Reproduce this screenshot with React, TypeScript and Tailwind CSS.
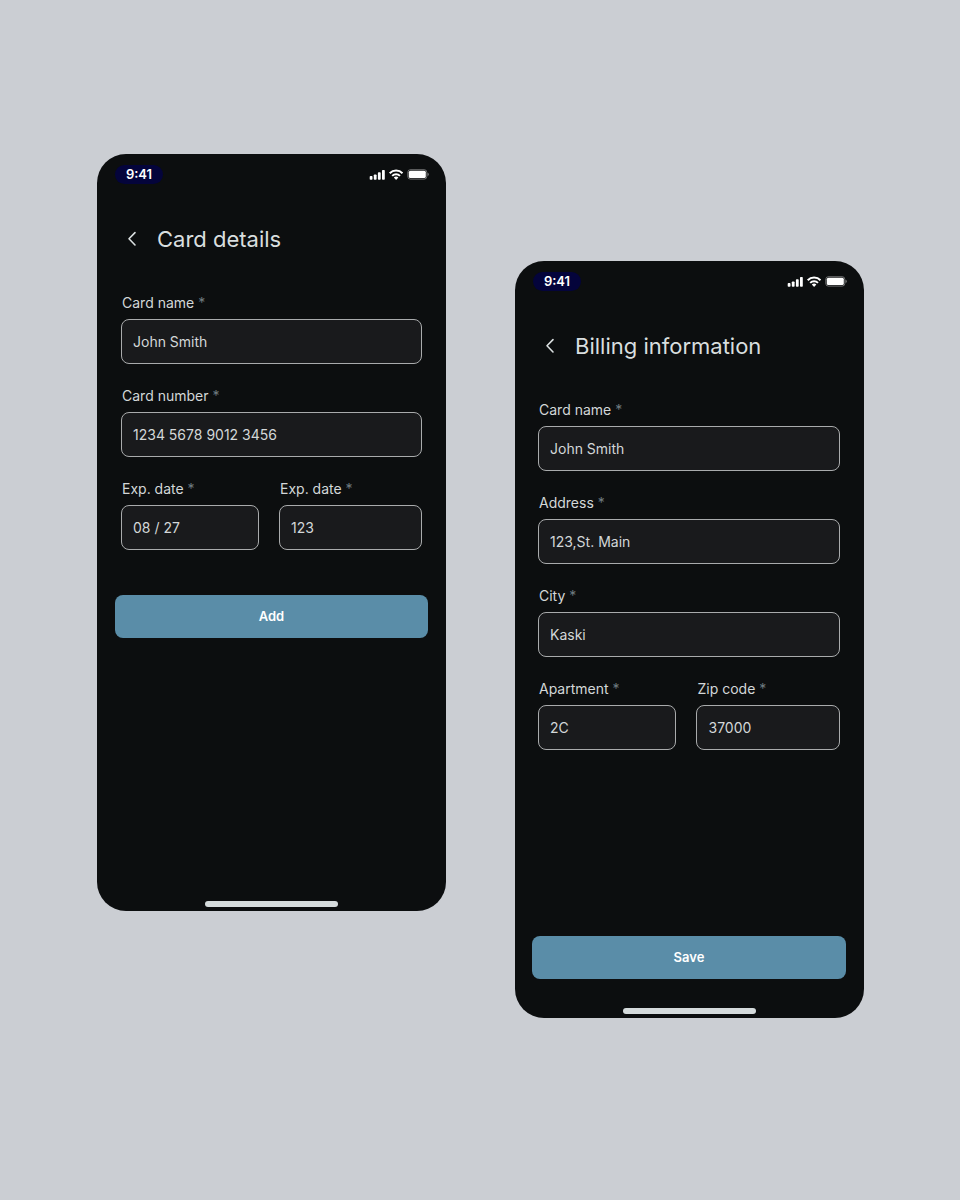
import { useId } from 'react';
import type { ReactNode } from 'react';

interface FieldProps {
  label: string;
  value: string;
}

function StatusIcons() {
  return (
    <svg width="60" height="12" viewBox="0 0 60 12" fill="none" aria-hidden="true">
      {/* Signal */}
      <g fill="#fff">
        <rect x="0.7" y="7.1" width="2.8" height="3.6" rx="0.8" />
        <rect x="4.8" y="5.5" width="2.8" height="5.2" rx="0.8" />
        <rect x="8.9" y="3.3" width="2.8" height="7.4" rx="0.8" />
        <rect x="13" y="0.9" width="2.8" height="9.8" rx="0.8" />
      </g>
      {/* Wifi */}
      <g stroke="#fff" strokeWidth="2">
        <path d="M20.7 4.2a9 9 0 0 1 12.8 0" />
        <path d="M23.2 6.9a5.5 5.5 0 0 1 7.8 0" />
      </g>
      <path d="M27.1 11l-2.3-2.4a3.2 3.2 0 0 1 4.6 0z" fill="#fff" />
      {/* Battery */}
      <rect x="38.8" y="0.7" width="19" height="9.4" rx="2.6" stroke="#fff" strokeOpacity="0.4" />
      <rect x="39.8" y="1.7" width="17" height="7.4" rx="1.5" fill="#fff" />
      <path d="M58.6 3.8v3.2a1.7 1.7 0 0 0 0-3.2z" fill="#fff" fillOpacity="0.5" />
    </svg>
  );
}

function Field({ label, value }: FieldProps) {
  const id = useId();

  return (
    <div className="min-w-0">
      <label htmlFor={id} className="block pl-px text-sm leading-5 text-[#d3d7d8]">
        {label} <span className="text-[#6f7b80]">*</span>
      </label>
      <input
        id={id}
        type="text"
        defaultValue={value}
        className="mt-1.5 block h-[45px] w-full rounded-lg border border-[#a9abac] bg-[#191a1c] px-[11px] text-sm text-[#d3d7d8] outline-none focus:border-[#5a8da8]"
      />
    </div>
  );
}

function SubmitButton({ children }: { children: ReactNode }) {
  return (
    <button
      type="submit"
      className="h-[43px] w-full cursor-pointer rounded-lg bg-[#5a8da8] text-[13px] font-semibold text-white"
    >
      {children}
    </button>
  );
}

function Phone({ title, children }: { title: string; children: ReactNode }) {
  return (
    <section className="flex min-h-[757px] w-full flex-col overflow-hidden rounded-[29px] bg-[#0c0e0f]">
      {/* Status bar */}
      <div className="flex items-center justify-between pt-[11px] pr-[17px] pl-[18px]">
        <span className="flex h-[19px] w-12 items-center justify-center rounded-full bg-[#04043b] text-[13px] font-semibold text-white">
          9:41
        </span>
        <StatusIcons />
      </div>

      <header className="mt-[39px] flex items-center pl-6">
        <button type="button" aria-label="Back" className="flex h-8 w-[22px] cursor-pointer items-center justify-center">
          <svg width="10" height="16" viewBox="0 0 10 16" fill="none" stroke="#d9dedf" strokeWidth="1.6" strokeLinecap="round" strokeLinejoin="round">
            <path d="M8 1.6L2 7.8l6 6.2" />
          </svg>
        </button>
        <h1 className="ml-[14px] text-[22px] leading-8 text-[#d9dedf]">{title}</h1>
      </header>

      <form className="mt-[38px] flex flex-1 flex-col" onSubmit={(e) => e.preventDefault()}>
        {children}
      </form>

      {/* Home indicator */}
      <div className="mx-auto mb-1 h-[6px] w-[133px] rounded-full bg-[#d5dbdc]" />
    </section>
  );
}

export default function App() {
  return (
    <main className="flex min-h-screen items-start gap-[69px] bg-[#cbced3] pt-[154px] pr-24 pb-40 pl-[97px] font-['Inter',sans-serif]">
      <div className="min-w-0 flex-1">
        <Phone title="Card details">
          <div className="flex flex-col gap-[22px] px-6">
            <Field label="Card name" value="John Smith" />
            <Field label="Card number" value="1234 5678 9012 3456" />
            <div className="grid grid-cols-[138fr_143fr] gap-5">
              <Field label="Exp. date" value="08 / 27" />
              <Field label="Exp. date" value="123" />
            </div>
          </div>
          <div className="mt-[45px] px-[18px]">
            <SubmitButton>Add</SubmitButton>
          </div>
        </Phone>
      </div>

      <div className="mt-[107px] min-w-0 flex-1">
        <Phone title="Billing information">
          <div className="flex flex-col gap-[22px] pr-6 pl-[23px]">
            <Field label="Card name" value="John Smith" />
            <Field label="Address" value="123,St. Main" />
            <Field label="City" value="Kaski" />
            <div className="grid grid-cols-[138fr_143fr] gap-5">
              <Field label="Apartment" value="2C" />
              <Field label="Zip code" value="37000" />
            </div>
          </div>
          <div className="mt-auto pr-[18px] pb-[29px] pl-[17px]">
            <SubmitButton>Save</SubmitButton>
          </div>
        </Phone>
      </div>
    </main>
  );
}
